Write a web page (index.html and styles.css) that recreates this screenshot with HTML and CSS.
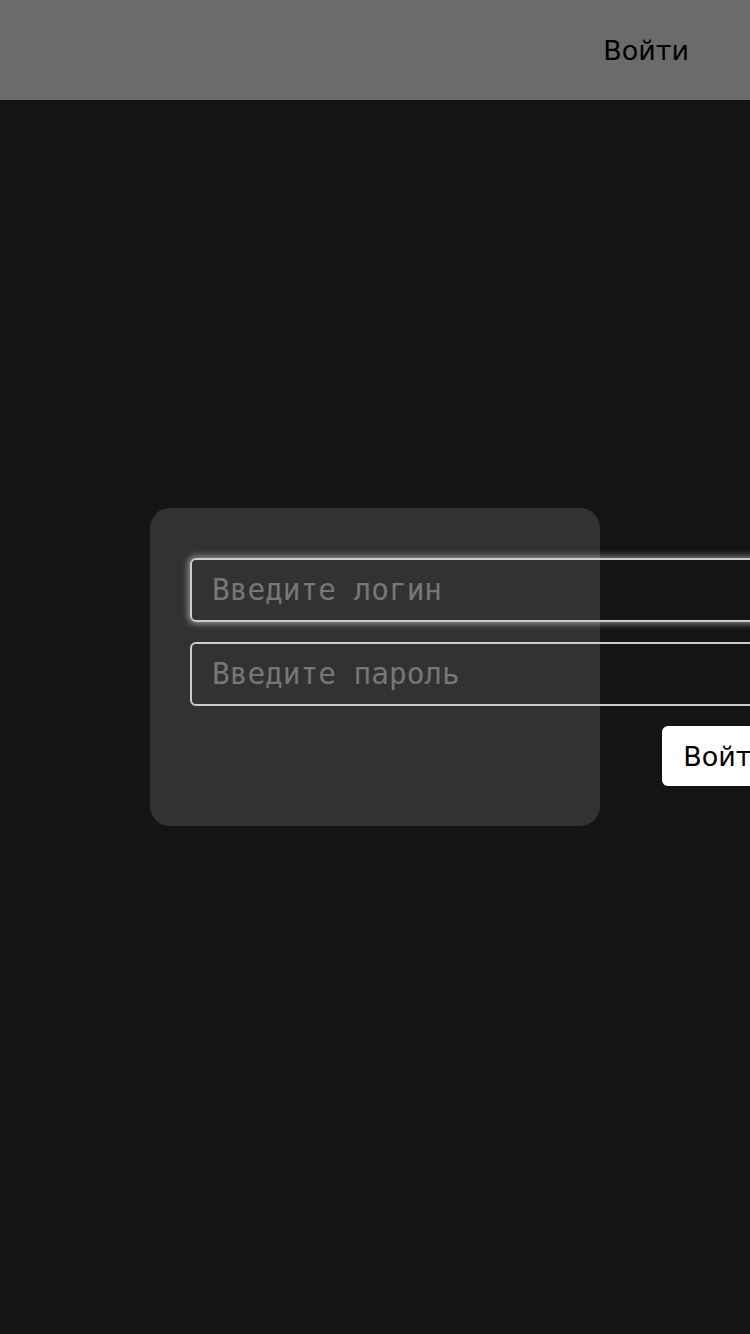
FILE: index.html
```html
<!DOCTYPE html>
<html lang="ru">
<head>
<meta charset="utf-8">
<title>Вход</title>
<link rel="stylesheet" href="styles.css">
</head>
<body>
<header class="topbar">
  <a class="topbar-link" href="#">Войти</a>
</header>
<main class="main">
  <form class="card">
    <input class="field field-focus" type="text" placeholder="Введите логин">
    <input class="field" type="password" placeholder="Введите пароль">
    <div class="actions">
      <button class="btn" type="button">Войти</button>
    </div>
  </form>
</main>
</body>
</html>
```
FILE: styles.css
```css
* { box-sizing: border-box; }
html, body {
  margin: 0;
  padding: 0;
  background: #141414;
  overflow: hidden;
}
body {
  font-family: "DejaVu Sans", sans-serif;
  width: 750px;
  height: 1334px;
}
.topbar {
  height: 100px;
  background: #6b6b6b;
  display: flex;
  align-items: center;
  justify-content: flex-end;
  padding-right: 61px;
}
.topbar-link {
  color: #000;
  text-decoration: none;
  font-size: 27px;
  line-height: 1;
}
.main {
  height: 1234px;
  padding-bottom: 100px;
  display: flex;
  align-items: center;
  justify-content: center;
}
.card {
  width: 450px;
  height: 318px;
  background: #323232;
  border-radius: 20px;
  padding: 50px 0 40px 40px;
  display: flex;
  flex-direction: column;
  gap: 20px;
  margin: 0;
}
.field {
  flex: none;
  width: 600px;
  height: 64px;
  border: 2px solid #cccccc;
  border-radius: 6px;
  background: transparent;
  padding: 0 20px;
  font-family: "DejaVu Sans Mono", monospace;
  font-size: 29.4px;
  color: #ddd;
  outline: none;
}
.field::placeholder { color: #777777; }
.field-focus {
  box-shadow: 0 0 6px 2px rgba(255, 255, 255, 0.45);
}
.actions {
  width: 600px;
  display: flex;
  justify-content: flex-end;
}
.btn {
  height: 60px;
  background: #fff;
  border: none;
  border-radius: 6px;
  padding: 0 21px;
  font-family: "DejaVu Sans", sans-serif;
  font-size: 27px;
  color: #000;
}
```
